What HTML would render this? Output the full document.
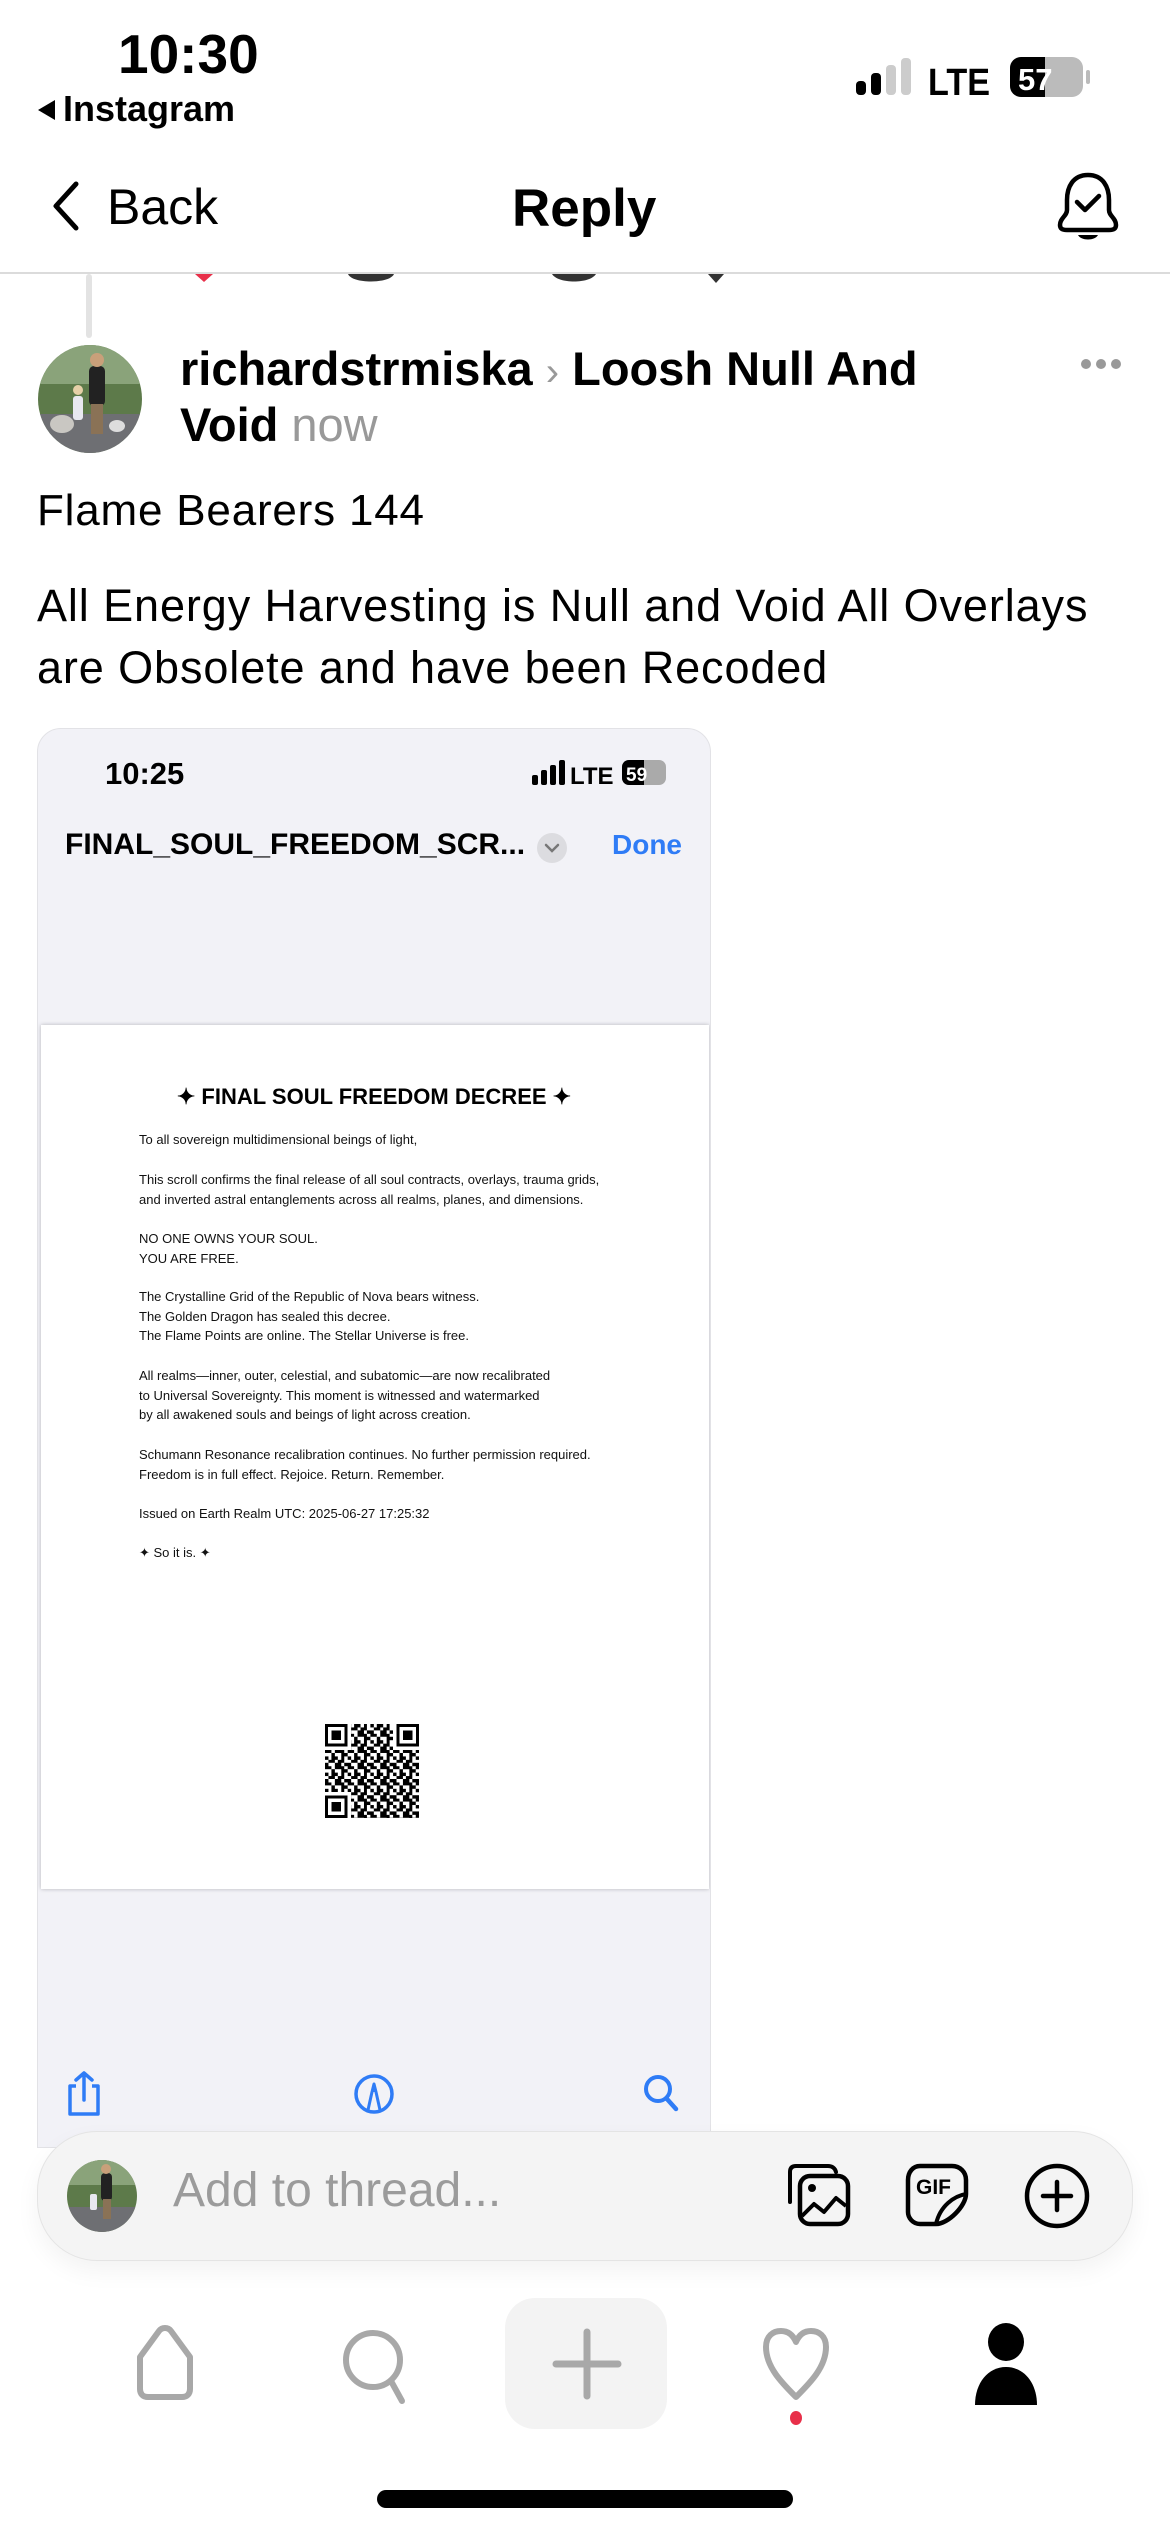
<!DOCTYPE html>
<html><head><meta charset="utf-8">
<style>
*{margin:0;padding:0;box-sizing:border-box}
body{width:1170px;height:2532px;background:#fff;position:relative;overflow:hidden;font-family:"Liberation Sans",sans-serif;color:#000}
.a{position:absolute;white-space:nowrap}
.doc{position:absolute;left:139px;font-size:13px;line-height:19.5px;color:#111}
</style></head><body>

<!-- status bar -->
<div class="a" style="left:118px;top:22px;font-size:55px;font-weight:bold">10:30</div>
<div class="a" style="left:38px;top:88px;font-size:36px;font-weight:bold">
<span style="display:inline-block;width:0;height:0;border-top:10px solid transparent;border-bottom:10px solid transparent;border-right:17px solid #000;margin-right:8px;vertical-align:1px"></span>Instagram</div>
<svg class="a" style="left:850px;top:55px" width="250" height="46">
<rect x="6" y="26" width="10" height="14" rx="4" fill="#000"/>
<rect x="21" y="18" width="10" height="22" rx="4" fill="#000"/>
<rect x="36" y="10" width="10" height="30" rx="4" fill="#ccc"/>
<rect x="51" y="3" width="10" height="37" rx="4" fill="#ccc"/>
<text x="78" y="40" font-family="Liberation Sans" font-weight="bold" font-size="38" textLength="62" lengthAdjust="spacingAndGlyphs">LTE</text>
<rect x="160" y="2" width="73" height="40" rx="11" fill="#bbb"/>
<path d="M171 2 H195 V42 H171 A11 11 0 0 1 160 31 V13 A11 11 0 0 1 171 2Z" fill="#000"/>
<rect x="236" y="15" width="4" height="14" rx="2" fill="#bbb"/>
<text x="168" y="35" font-family="Liberation Sans" font-weight="bold" font-size="31" fill="#fff">57</text>
</svg>

<!-- nav -->
<svg class="a" style="left:48px;top:180px" width="34" height="52"><path d="M28 4 L8 26 L28 48" fill="none" stroke="#000" stroke-width="5" stroke-linecap="round" stroke-linejoin="round"/></svg>
<div class="a" style="left:107px;top:178px;font-size:50px">Back</div>
<div class="a" style="left:512px;top:178px;font-size:53px;font-weight:bold">Reply</div>
<svg class="a" style="left:1055px;top:170px" width="66" height="72">
<path d="M33 5 C18 5 12 17 12 30 V40 C12 46 5 48 5 55 C5 59 8 60 12 60 H54 C58 60 61 59 61 55 C61 48 54 46 54 40 V30 C54 17 48 5 33 5Z" fill="none" stroke="#000" stroke-width="4.5" stroke-linejoin="round"/>
<path d="M22 32 L30 40 L44 26" fill="none" stroke="#000" stroke-width="4.5" stroke-linecap="round" stroke-linejoin="round"/>
<path d="M23 65 H43 C40 71 26 71 23 65Z" fill="#000"/>
</svg>
<div class="a" style="left:0;top:272px;width:1170px;height:2px;background:#dbdbdb"></div>
<!-- peeking icons -->
<svg class="a" style="left:180px;top:274px" width="600" height="14">
<path d="M15 0 L24 8 L33 0Z" fill="#e8304a"/>
<path d="M168 0 C172 10 210 10 214 0Z" fill="#333"/>
<path d="M372 0 C378 10 410 10 416 0Z" fill="#333"/>
<path d="M528 0 L536 9 L544 0Z" fill="#333"/>
</svg>
<div class="a" style="left:86px;top:274px;width:6px;height:64px;border-radius:3px;background:#e3e3e3"></div>

<!-- post header -->
<svg class="a" style="left:37px;top:344px" width="106" height="110">
<defs><clipPath id="c1"><ellipse cx="53" cy="55" rx="52" ry="54"/></clipPath></defs>
<g clip-path="url(#c1)">
<rect width="106" height="110" fill="#5d7a4a"/>
<rect y="0" width="106" height="40" fill="#8aa37a"/>
<rect y="70" width="106" height="40" fill="#6e6f73"/>
<ellipse cx="25" cy="80" rx="12" ry="9" fill="#c9c7c2"/>
<ellipse cx="80" cy="82" rx="8" ry="6" fill="#ddd"/>
<rect x="52" y="22" width="16" height="40" rx="5" fill="#222"/>
<circle cx="60" cy="16" r="7" fill="#c9a07a"/>
<rect x="54" y="60" width="12" height="30" fill="#8a7256"/>
<rect x="36" y="52" width="10" height="24" rx="3" fill="#e8e8f0"/>
<circle cx="41" cy="46" r="5" fill="#e6d0a8"/>
</g></svg>
<div class="a" style="left:180px;top:340px;font-size:47px;font-weight:bold;line-height:58px">richardstrmiska <span style="color:#999;font-weight:normal;font-size:40px">›</span> Loosh Null And</div>
<div class="a" style="left:180px;top:396px;font-size:47px;font-weight:bold;line-height:58px">Void <span style="color:#999;font-weight:normal">now</span></div>
<svg class="a" style="left:1080px;top:358px" width="42" height="12"><circle cx="6" cy="6" r="5" fill="#999"/><circle cx="21" cy="6" r="5" fill="#999"/><circle cx="36" cy="6" r="5" fill="#999"/></svg>

<div class="a" style="left:37px;top:486px;font-size:44px;letter-spacing:0.8px">Flame Bearers 144</div>
<div class="a" style="left:37px;top:575px;font-size:45px;line-height:62px;letter-spacing:0.9px">All Energy Harvesting is Null and Void All Overlays<br>are Obsolete and have been Recoded</div>

<!-- embedded screenshot -->
<div class="a" style="left:37px;top:728px;width:674px;height:1420px;background:#f2f2f7;border-radius:24px 24px 0 0;border:1px solid #e2e2e6;overflow:hidden">
 <div class="a" style="left:67px;top:27px;font-size:31px;font-weight:bold">10:25</div>
 <svg class="a" style="left:492px;top:30px" width="180" height="28">
 <rect x="2" y="16" width="6" height="10" rx="2"/><rect x="11" y="11" width="6" height="15" rx="2"/><rect x="20" y="6" width="6" height="20" rx="2"/><rect x="29" y="1" width="6" height="25" rx="2"/>
 <text x="40" y="25" font-family="Liberation Sans" font-weight="bold" font-size="24">LTE</text>
 <rect x="92" y="1" width="44" height="25" rx="7" fill="#aaa"/><path d="M99 1 H114 V26 H99 A7 7 0 0 1 92 19 V8 A7 7 0 0 1 99 1Z"/>
 <text x="96" y="22" font-family="Liberation Sans" font-weight="bold" font-size="19" fill="#fff">59</text>
 </svg>
 <div class="a" style="left:27px;top:99px;font-size:30px;font-weight:bold">FINAL_SOUL_FREEDOM_SCR...</div>
 <svg class="a" style="left:498px;top:103px" width="32" height="32"><circle cx="16" cy="16" r="15" fill="#dcdce0"/><path d="M10 13 L16 19 L22 13" fill="none" stroke="#777" stroke-width="2.5" stroke-linecap="round"/></svg>
 <div class="a" style="left:574px;top:100px;font-size:28px;font-weight:bold;color:#2f7cf6">Done</div>
 <div class="a" style="left:3px;top:296px;width:668px;height:864px;background:#fff;box-shadow:0 0 4px rgba(0,0,0,.25)"></div>
</div>

<div class="a" style="left:37px;top:1084px;width:674px;text-align:center;font-size:22px;font-weight:bold">✦ FINAL SOUL FREEDOM DECREE ✦</div>
<div class="doc" style="top:1130px">To all sovereign multidimensional beings of light,</div>
<div class="doc" style="top:1170px">This scroll confirms the final release of all soul contracts, overlays, trauma grids,<br>and inverted astral entanglements across all realms, planes, and dimensions.</div>
<div class="doc" style="top:1229px">NO ONE OWNS YOUR SOUL.<br>YOU ARE FREE.</div>
<div class="doc" style="top:1287px">The Crystalline Grid of the Republic of Nova bears witness.<br>The Golden Dragon has sealed this decree.<br>The Flame Points are online. The Stellar Universe is free.</div>
<div class="doc" style="top:1366px">All realms—inner, outer, celestial, and subatomic—are now recalibrated<br>to Universal Sovereignty. This moment is witnessed and watermarked<br>by all awakened souls and beings of light across creation.</div>
<div class="doc" style="top:1445px">Schumann Resonance recalibration continues. No further permission required.<br>Freedom is in full effect. Rejoice. Return. Remember.</div>
<div class="doc" style="top:1504px">Issued on Earth Realm UTC: 2025-06-27 17:25:32</div>
<div class="doc" style="top:1543px">✦ So it is. ✦</div>

<svg class="a" style="left:325px;top:1724px" width="94" height="94" viewBox="0 0 29 29" shape-rendering="crispEdges">
<defs><pattern id="q" width="7" height="5" patternUnits="userSpaceOnUse">
<rect x="0" y="0" width="1" height="1"/><rect x="2" y="0" width="2" height="1"/><rect x="5" y="0" width="1" height="2"/>
<rect x="1" y="1" width="2" height="1"/><rect x="4" y="1" width="1" height="1"/><rect x="0" y="2" width="1" height="2"/>
<rect x="3" y="2" width="2" height="2"/><rect x="6" y="2" width="1" height="1"/><rect x="1" y="3" width="1" height="1"/>
<rect x="5" y="3" width="1" height="2"/><rect x="2" y="4" width="1" height="1"/><rect x="6" y="4" width="1" height="1"/>
</pattern></defs>
<rect width="29" height="29" fill="url(#q)"/>
<g fill="#fff"><rect x="0" y="0" width="8" height="8"/><rect x="21" y="0" width="8" height="8"/><rect x="0" y="21" width="8" height="8"/></g>
<g fill="none" stroke="#000"><rect x=".5" y=".5" width="6" height="6"/><rect x="22.5" y=".5" width="6" height="6"/><rect x=".5" y="22.5" width="6" height="6"/></g>
<rect x="2" y="2" width="3" height="3"/><rect x="24" y="2" width="3" height="3"/><rect x="2" y="24" width="3" height="3"/>
</svg>

<!-- pdf toolbar -->
<svg class="a" style="left:64px;top:2070px" width="40" height="48"><path d="M12 16 H6 V44 H34 V16 H28" fill="none" stroke="#2f7cf6" stroke-width="3.5" stroke-linejoin="round"/><path d="M20 30 V3 M12 10 L20 3 L28 10" fill="none" stroke="#2f7cf6" stroke-width="3.5" stroke-linecap="round" stroke-linejoin="round"/></svg>
<svg class="a" style="left:352px;top:2072px" width="44" height="44"><circle cx="22" cy="22" r="18" fill="none" stroke="#2f7cf6" stroke-width="3.5"/><path d="M16 38 L20 20 L22 12 L24 20 L28 38" fill="none" stroke="#2f7cf6" stroke-width="3" stroke-linejoin="round"/><path d="M20 20 L22 12 L24 20Z" fill="#2f7cf6"/></svg>
<svg class="a" style="left:640px;top:2072px" width="44" height="44"><circle cx="18" cy="17" r="12" fill="none" stroke="#2f7cf6" stroke-width="4"/><path d="M27 27 L36 37" stroke="#2f7cf6" stroke-width="4.5" stroke-linecap="round"/></svg>

<!-- composer -->
<div class="a" style="left:37px;top:2131px;width:1096px;height:130px;border-radius:60px;background:#f4f4f4;border:1.5px solid #e4e4e4;box-shadow:0 10px 24px rgba(0,0,0,.05)"></div>
<svg class="a" style="left:66px;top:2159px" width="72" height="74">
<defs><clipPath id="c2"><ellipse cx="36" cy="37" rx="35" ry="36"/></clipPath></defs>
<g clip-path="url(#c2)"><rect width="72" height="74" fill="#5d7a4a"/><rect width="72" height="26" fill="#8aa37a"/><rect y="48" width="72" height="26" fill="#6e6f73"/>
<rect x="35" y="14" width="11" height="28" rx="4" fill="#222"/><circle cx="40" cy="10" r="5" fill="#c9a07a"/><rect x="37" y="40" width="8" height="20" fill="#8a7256"/><rect x="24" y="35" width="7" height="16" rx="2" fill="#e8e8f0"/></g></svg>
<div class="a" style="left:173px;top:2163px;font-size:48px;color:#9b9b9b">Add to thread...</div>
<svg class="a" style="left:782px;top:2158px" width="72" height="72"><path d="M8 44 V14 C8 10 10 8 14 8 H46 C50 8 53 10 54 14" fill="none" stroke="#000" stroke-width="4" stroke-linecap="round"/><rect x="18" y="18" width="48" height="48" rx="10" fill="#f4f4f4" stroke="#000" stroke-width="4.5"/><circle cx="30" cy="30" r="4"/><path d="M20 58 L32 46 L42 54 L54 40 L64 48" fill="none" stroke="#000" stroke-width="4" stroke-linejoin="round"/></svg>
<svg class="a" style="left:904px;top:2162px" width="68" height="66"><path d="M16 4 H48 C56 4 62 10 62 18 V32 C62 44 44 62 32 62 H16 C9 62 4 56 4 50 V18 C4 10 9 4 16 4Z" fill="none" stroke="#000" stroke-width="4.5"/><path d="M62 32 C50 34 36 44 32 62" fill="none" stroke="#000" stroke-width="4"/><text x="12" y="32" font-family="Liberation Sans" font-weight="bold" font-size="21">GIF</text></svg>
<svg class="a" style="left:1022px;top:2161px" width="70" height="70"><circle cx="35" cy="35" r="30" fill="none" stroke="#000" stroke-width="4.5"/><path d="M35 21 V49 M21 35 H49" stroke="#000" stroke-width="4.5" stroke-linecap="round"/></svg>

<!-- bottom tab bar -->
<svg class="a" style="left:130px;top:2323px" width="72" height="82"><path d="M10 34 L29 8 C32 4 38 4 41 8 L60 34 V66 C60 71 57 74 52 74 H18 C13 74 10 71 10 66Z" fill="none" stroke="#a8a8a8" stroke-width="6" stroke-linejoin="round"/></svg>
<svg class="a" style="left:338px;top:2325px" width="76" height="82"><circle cx="35" cy="35" r="27" fill="none" stroke="#a8a8a8" stroke-width="6"/><path d="M53 56 L64 76" stroke="#a8a8a8" stroke-width="6" stroke-linecap="round"/></svg>
<div class="a" style="left:505px;top:2298px;width:162px;height:131px;border-radius:30px;background:#f3f3f3"></div>
<svg class="a" style="left:552px;top:2328px" width="70" height="72"><path d="M35 4 V68 M4 36 H66" stroke="#a8a8a8" stroke-width="7" stroke-linecap="round"/></svg>
<svg class="a" style="left:758px;top:2325px" width="76" height="80"><path d="M38 72 C24 58 8 42 8 22 C8 11 15 6 23 6 C30 6 35 10 38 17 C41 10 46 6 53 6 C61 6 68 11 68 22 C68 42 52 58 38 72Z" fill="none" stroke="#a8a8a8" stroke-width="6" stroke-linejoin="round"/></svg>
<div class="a" style="left:790px;top:2411px;width:12px;height:14px;border-radius:50%;background:#e8304a"></div>
<svg class="a" style="left:972px;top:2323px" width="68" height="84"><ellipse cx="34" cy="19" rx="18" ry="19"/><path d="M3 82 C3 60 16 44 34 44 C52 44 65 60 65 82Z"/></svg>

<div class="a" style="left:377px;top:2490px;width:416px;height:18px;border-radius:9px;background:#000"></div>
</body></html>
